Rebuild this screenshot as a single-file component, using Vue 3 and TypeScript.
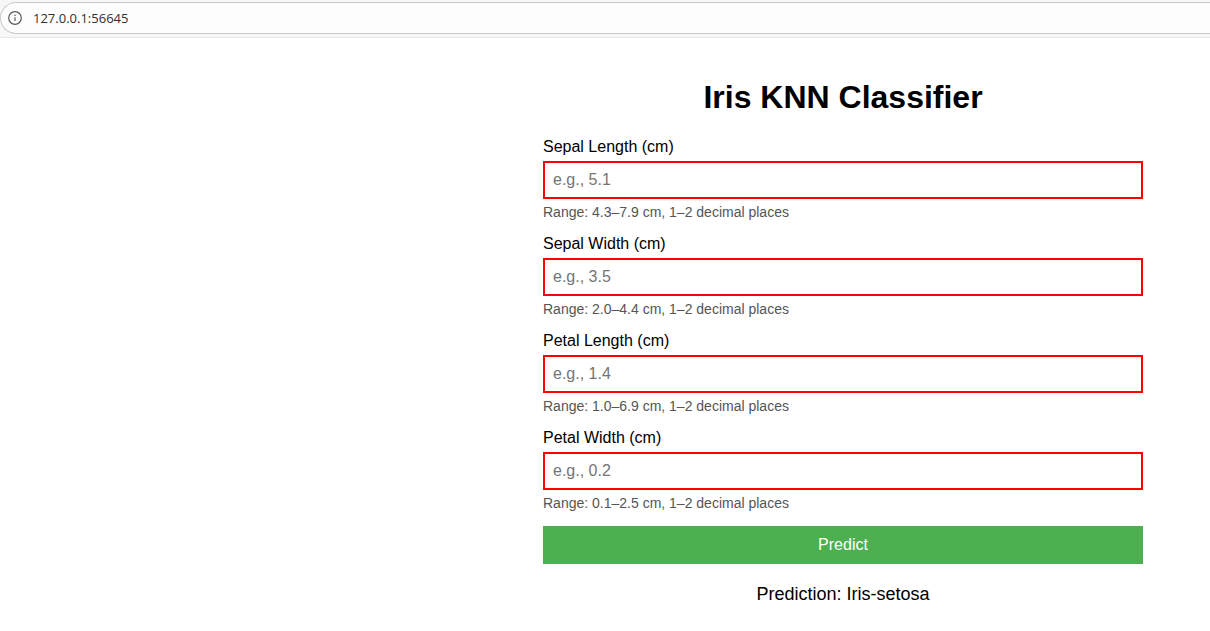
<script setup lang="ts">
import { ref } from 'vue'

interface Field {
  id: string
  label: string
  example: string
  min: string
  max: string
}

const fields: Field[] = [
  { id: 'sepal-length', label: 'Sepal Length (cm)', example: '5.1', min: '4.3', max: '7.9' },
  { id: 'sepal-width', label: 'Sepal Width (cm)', example: '3.5', min: '2.0', max: '4.4' },
  { id: 'petal-length', label: 'Petal Length (cm)', example: '1.4', min: '1.0', max: '6.9' },
  { id: 'petal-width', label: 'Petal Width (cm)', example: '0.2', min: '0.1', max: '2.5' },
]

const values = ref<Record<string, string>>({})
const address = ref('127.0.0.1:56645')
const prediction = ref('Iris-setosa')
</script>

<template>
  <div class="browser">
    <header class="toolbar">
      <div class="address-bar">
        <button class="site-info" type="button" aria-label="Site information">
          <svg viewBox="0 0 14 14" width="14" height="14" fill="none" aria-hidden="true">
            <circle cx="7" cy="7" r="6.3" stroke="#5a5a5a" stroke-width="1.2" />
            <path d="M7 6.2V10" stroke="#5a5a5a" stroke-width="1.2" />
            <circle cx="7" cy="4.3" r="0.8" fill="#5a5a5a" />
          </svg>
        </button>
        <input v-model="address" class="address" type="text" aria-label="Address" />
      </div>
    </header>

    <main class="page">
      <h1>Iris KNN Classifier</h1>
      <form @submit.prevent>
        <div v-for="field in fields" :key="field.id" class="group">
          <label :for="field.id">{{ field.label }}</label>
          <input
            :id="field.id"
            v-model="values[field.id]"
            type="text"
            inputmode="decimal"
            :placeholder="`e.g., ${field.example}`"
            :aria-describedby="`${field.id}-hint`"
          />
          <small :id="`${field.id}-hint`">Range: {{ field.min }}–{{ field.max }} cm, 1–2 decimal places</small>
        </div>
        <button class="predict" type="submit">Predict</button>
      </form>
      <p class="result">Prediction: {{ prediction }}</p>
    </main>
  </div>
</template>

<style>
body {
  margin: 0;
  background: #fff;
}
</style>

<style scoped>
.browser {
  font-family: "Liberation Sans", Arial, sans-serif;
  color: #000;
}

.toolbar {
  padding: 2px 0 3px;
  background: #f7f7f7;
  border-bottom: 1px solid #e8e8e8;
}

.address-bar {
  display: flex;
  align-items: center;
  gap: 11px;
  box-sizing: border-box;
  height: 32px;
  padding-left: 7px;
  background: #fdfdfd;
  border: 1px solid #cacaca;
  border-right: 0;
  border-radius: 16px 0 0 16px;
}

.site-info {
  display: flex;
  padding: 0;
  border: 0;
  background: none;
}

.address {
  flex: 1;
  min-width: 0;
  padding: 0;
  border: 0;
  outline: 0;
  background: none;
  color: #303030;
  font: 13px/18px "Open Sans", "Segoe UI", sans-serif;
}

.page {
  max-width: 600px;
  margin: 0 67px 0 auto;
  padding: 40px 0 24px;
}

h1 {
  margin: 0 0 22px;
  font-size: 32px;
  line-height: 38px;
  text-align: center;
}

.group {
  display: flex;
  flex-direction: column;
  gap: 5px;
  margin-bottom: 15px;
}

label {
  font-size: 16px;
  line-height: 18px;
}

.group input {
  box-sizing: border-box;
  width: 100%;
  height: 38px;
  padding: 8px;
  border: 2px solid #f00;
  border-radius: 0;
  outline: 0;
  background: #fff;
  font: 16px/18px "Liberation Sans", Arial, sans-serif;
}

.group input::placeholder {
  color: #757575;
  opacity: 1;
}

small {
  color: #555;
  font-size: 14px;
  line-height: 16px;
}

.predict {
  display: block;
  width: 100%;
  padding: 10px;
  border: 0;
  background: #4caf50;
  color: #fff;
  font: 16px/18px "Liberation Sans", Arial, sans-serif;
  cursor: pointer;
}

.result {
  margin: 20px 0 0;
  font-size: 18px;
  line-height: 20px;
  text-align: center;
}
</style>
